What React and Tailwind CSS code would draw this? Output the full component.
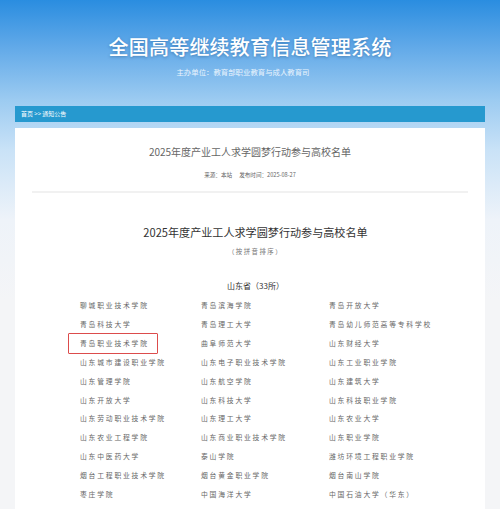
const schools = [
  ['聊城职业技术学院', '青岛滨海学院', '青岛开放大学'],
  ['青岛科技大学', '青岛理工大学', '青岛幼儿师范高等专科学校'],
  ['青岛职业技术学院', '曲阜师范大学', '山东财经大学'],
  ['山东城市建设职业学院', '山东电子职业技术学院', '山东工业职业学院'],
  ['山东管理学院', '山东航空学院', '山东建筑大学'],
  ['山东开放大学', '山东科技大学', '山东科技职业学院'],
  ['山东劳动职业技术学院', '山东理工大学', '山东农业大学'],
  ['山东农业工程学院', '山东商业职业技术学院', '山东职业学院'],
  ['山东中医药大学', '泰山学院', '潍坊环境工程职业学院'],
  ['烟台工程职业技术学院', '烟台黄金职业学院', '烟台南山学院'],
  ['枣庄学院', '中国海洋大学', '中国石油大学（华东）'],
];

// the highlighted entry gets a red frame
const marked = '青岛职业技术学院';

const School = ({ name }) => (
  <div className="relative">
    {name === marked && (
      <span className="absolute left-[-12px] top-[-1px] w-[90px] h-[21px] border-[1.5px] border-[#dc4c4c] rounded-[1px]" />
    )}
    <span>{name}</span>
  </div>
);

export default function App() {
  return (
    <div
      className="min-h-[509px] bg-[linear-gradient(180deg,#2a8de0_0px,#5fa8e8_45px,#9ccbf1_100px,#c9e2f7_150px,#eef3f9_220px,#f4f5f7_300px)] pb-10"
      style={{ fontFamily: '"Noto Sans CJK SC", "Noto Sans", sans-serif' }}
    >
      {/* header */}
      <header className="pt-[35px] pb-[29px] text-center text-white">
        <h1 className="text-[20px] leading-[24px] font-medium tracking-[0.2px] [text-shadow:0_1px_3px_rgba(0,40,90,0.35)]">
          全国高等继续教育信息管理系统
        </h1>
        <p className="mt-[8px] pr-[14px] text-[7.4px] leading-[10px] text-[#eaf4fd]">
          主办单位：教育部职业教育与成人教育司
        </p>
      </header>

      <div className="mx-[15px]">
        {/* breadcrumb */}
        <div className="h-[16px] leading-[16px] bg-[#2699cf] pl-[6px] text-[6px] text-white">
          首页 &gt;&gt; 通知公告
        </div>

        {/* article */}
        <div className="mt-[6px] bg-white pb-10">
          <div className="text-center">
            <h2 className="pt-[17px] text-[10px] leading-[14px] text-[#666]">
              2025年度产业工人求学圆梦行动参与高校名单
            </h2>
            <p className="mt-[11.5px] text-[5.6px] leading-[8px] text-[#666]">
              来源：本站<span className="inline-block w-[7px]" />发布时间：2025-08-27
            </p>
          </div>
          <div className="mx-[17px] mt-[12.5px] h-[2px] bg-[#f1f1f1]" />

          <div className="pl-[11px] text-center">
            <h3 className="mt-[32px] text-[11.1px] leading-[14px] text-[#333]">
              2025年度产业工人求学圆梦行动参与高校名单
            </h3>
            <p className="mt-[9px] text-[6.4px] leading-[8px] tracking-[1.5px] text-[#777]">
              （按拼音排序）
            </p>
            <p className="mt-[25px] text-[8px] leading-[10px] text-[#333]">
              山东省（33所）
            </p>
          </div>

          <div className="mt-[5.3px] pl-[65px] grid grid-cols-[121px_128px_1fr] text-[6.8px] leading-[18.85px] tracking-[1.8px] text-[#666]">
            {schools.map((row) =>
              row.map((name) => <School key={name} name={name} />)
            )}
          </div>
        </div>
      </div>
    </div>
  );
}
